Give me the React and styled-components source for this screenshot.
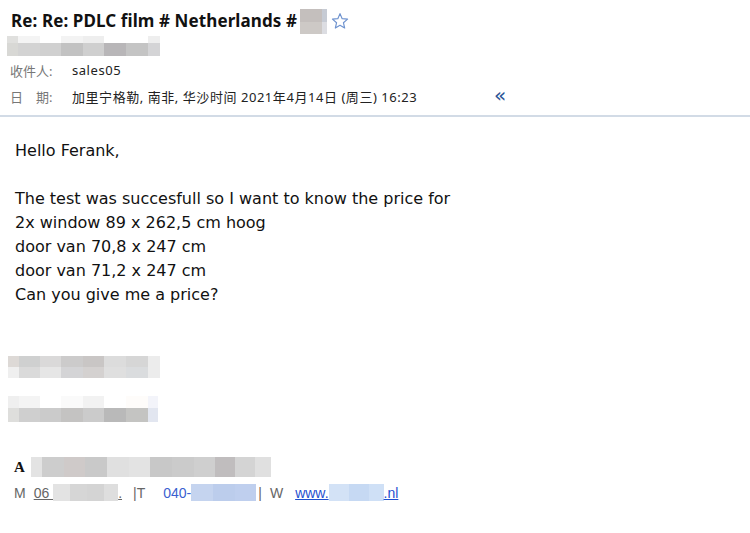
import React from "react";
import styled, { createGlobalStyle } from "styled-components";

const GlobalStyle = createGlobalStyle`
  html, body {
    margin: 0;
    padding: 0;
    background: #fff;
  }
  body {
    font-family: "Noto Sans", "Noto Sans CJK SC", sans-serif;
    color: #000;
  }
`;

// pixelated blocks that hide private details
const sender = {
  cols: [11, 22, 21, 22, 21, 22, 22, 12],
  rows: [7, 13],
  colors: [
    ["#e0e0de", "#f4f4f4", "#ffffff", "#f3f3f3", "#eeeeee", "#ffffff", "#ffffff", "#eeeeee"],
    ["#d8d8d5", "#d3d3d3", "#d0d0d0", "#c2c2c2", "#cfcfcf", "#b8b6b8", "#c4c4c4", "#d4d4d6"],
  ],
};

const titleBlur = {
  cols: [22, 5],
  rows: [13, 12],
  colors: [
    ["#c4bfbd", "#c6cbd4"],
    ["#cdc9c6", "#dcdde2"],
  ],
};

const signBlurOne = {
  cols: [11, 21, 21, 22, 21, 22, 22, 12],
  rows: [11, 11],
  colors: [
    ["#ddd9d6", "#cfd0d0", "#dad9d9", "#cccbcb", "#c9c6c5", "#dcdcdc", "#d6d6d6", "#ececec"],
    ["#efefef", "#dadada", "#e6e6e6", "#d4d4d6", "#d4d1d0", "#dfdfdf", "#dadcde", "#ececec"],
  ],
};

const signBlurTwo = {
  cols: [11, 21, 21, 22, 21, 22, 22, 10],
  rows: [12, 14],
  colors: [
    ["#efefef", "#f4f4f4", "#ffffff", "#fafafa", "#f2f2f2", "#ffffff", "#fefcfa", "#f3f4fa"],
    ["#dededc", "#cfcfcf", "#cbcbcb", "#c4c3c2", "#cbcbcb", "#b9b9b9", "#c4c4c2", "#e2e6f0"],
  ],
};

const nameBlur = {
  cols: [11, 22, 21, 22, 22, 21, 22, 22, 21, 20, 20, 16],
  rows: [20],
  colors: [
    ["#e3e3e3", "#cdcdcd", "#cfcac9", "#c9c9c9", "#e0e0e0", "#e3e3e3", "#c8c8c8", "#cbcbcb", "#cfcfcf", "#c0bdbe", "#d4d4d4", "#e0e0e0"],
  ],
};

const mobileBlur = {
  cols: [17, 17, 17, 14],
  rows: [17],
  colors: [["#e3e3e3", "#d6d6d6", "#d4d4d4", "#dedede"]],
};

const phoneBlur = {
  cols: [22, 22, 21],
  rows: [17],
  colors: [["#c5d4ef", "#bccdec", "#bfcfee"]],
};

const siteBlur = {
  cols: [20, 20, 15],
  rows: [17],
  colors: [["#d3e2f6", "#c6d9f3", "#cfe0f6"]],
};

function Mosaic({ data, ...rest }) {
  return (
    <MosaicGrid
      $cols={data.cols.map((c) => c + "px").join(" ")}
      $rows={data.rows.map((r) => r + "px").join(" ")}
      {...rest}
    >
      {data.colors.flat().map((c, i) => (
        <Cell key={i} $color={c} />
      ))}
    </MosaicGrid>
  );
}

function Star() {
  return (
    <StarIcon viewBox="0 0 20 20">
      <path
        d="M10 1.8l2.4 5.6 6 .5-4.6 4 1.4 5.9L10 14.7l-5.2 3.1 1.4-5.9-4.6-4 6-.5z"
        fill="none"
        stroke="#6f93cf"
        strokeWidth="1.3"
        strokeLinejoin="round"
      />
    </StarIcon>
  );
}

export default function App() {
  return (
    <Page>
      <GlobalStyle />
      <Header>
        <TitleRow>
          <Title>Re: Re: PDLC film # Netherlands #</Title>
          <Mosaic data={titleBlur} />
          <Star />
        </TitleRow>
        <SenderRow>
          <Mosaic data={sender} />
        </SenderRow>
        <MetaRow>
          <Label>收件人:</Label>
          <Value>sales05</Value>
        </MetaRow>
        <MetaRow>
          <Label>
            日<LabelGap />期:
          </Label>
          <Value>加里宁格勒, 南非, 华沙时间 2021年4月14日 (周三) 16:23</Value>
          <Toggle>«</Toggle>
        </MetaRow>
      </Header>

      <Body>
        <Line>Hello Ferank,</Line>
        <Line>&nbsp;</Line>
        <Line>The test was succesfull so I want to know the price for</Line>
        <Line>2x window 89 x 262,5 cm hoog</Line>
        <Line>door van 70,8 x 247 cm</Line>
        <Line>door van 71,2 x 247 cm</Line>
        <Line>Can you give me a price?</Line>
      </Body>

      <Signature>
        <Mosaic data={signBlurOne} />
        <Mosaic data={signBlurTwo} />
        <NameRow>
          <Initial>A</Initial>
          <Mosaic data={nameBlur} />
        </NameRow>
        <ContactRow>
          <Key>M</Key>
          <Underlined $color="#666" $left="8px">
            06&nbsp;
            <Mosaic data={mobileBlur} />.
          </Underlined>
          <Key $left="11px">|T</Key>
          <Phone>
            040-
            <Mosaic data={phoneBlur} />
          </Phone>
          <Key $left="2px">|</Key>
          <Key $left="8px">W</Key>
          <Underlined $color="#1f4fcf" $left="12px">
            www.
            <Mosaic data={siteBlur} />
            .nl
          </Underlined>
        </ContactRow>
      </Signature>
    </Page>
  );
}

const Page = styled.div`
  width: 750px;
  height: 533px;
  overflow: hidden;
  background: #fff;
`;

const Header = styled.div`
  padding: 8px 10px 6px 10px;
  border-bottom: 2px solid #d2dbe6;
`;

const TitleRow = styled.div`
  display: flex;
  align-items: center;
  gap: 3px;
  height: 26px;
`;

const Title = styled.h1`
  margin: 0 0 1px 1px;
  font-family: "Noto Sans", "Noto Sans CJK SC", sans-serif;
  font-size: 17px;
  font-weight: 700;
  letter-spacing: 0.1px;
  color: #111;
`;

const StarIcon = styled.svg`
  width: 18px;
  height: 18px;
  margin-left: 1px;
`;

const SenderRow = styled.div`
  display: flex;
  margin-left: -3px;
  height: 23px;
  align-items: center;
`;

const MosaicGrid = styled.span`
  display: inline-grid;
  grid-template-columns: ${(p) => p.$cols};
  grid-template-rows: ${(p) => p.$rows};
  vertical-align: middle;
`;

const Cell = styled.span`
  background: ${(p) => p.$color};
`;

const MetaRow = styled.div`
  display: grid;
  grid-template-columns: 62px 422px auto;
  align-items: center;
  height: 26px;
  font-family: "Noto Sans", "Noto Sans CJK SC", sans-serif;
  font-size: 13px;
`;

const Label = styled.span`
  color: #777;
  display: flex;
`;

const LabelGap = styled.span`
  width: 13px;
`;

const Value = styled.span`
  color: #222;
  letter-spacing: 0.55px;
`;

const Toggle = styled.span`
  color: #2c5597;
  font-size: 20px;
  line-height: 1;
  margin-top: -3px;
  font-family: "DejaVu Sans", sans-serif;
`;

const Body = styled.div`
  padding: 22px 15px 0 15px;
  font-family: "DejaVu Sans", Verdana, sans-serif;
  font-size: 16px;
  color: #111;
`;

const Line = styled.div`
  line-height: 24px;
`;

const Signature = styled.div`
  padding: 49px 0 0 8px;
  display: flex;
  flex-direction: column;
  align-items: flex-start;
  gap: 18px;
`;

const NameRow = styled.div`
  display: flex;
  align-items: center;
  gap: 6px;
  margin-top: 17px;
  padding-left: 6px;
`;

const Initial = styled.span`
  font-family: "Liberation Serif", serif;
  font-weight: 700;
  font-size: 15px;
  color: #111;
`;

const ContactRow = styled.div`
  display: flex;
  align-items: center;
  margin-top: -11px;
  padding-left: 6px;
  font-family: "Liberation Sans", Arial, sans-serif;
  font-size: 14px;
`;

const Key = styled.span`
  color: #666;
  margin-left: ${(p) => p.$left || "0"};
`;

const Underlined = styled.span`
  display: inline-flex;
  align-items: center;
  margin-left: ${(p) => p.$left};
  color: ${(p) => p.$color};
  text-decoration: underline;
`;

const Phone = styled.span`
  display: inline-flex;
  align-items: center;
  margin-left: 18px;
  color: #3a5fd0;
`;
